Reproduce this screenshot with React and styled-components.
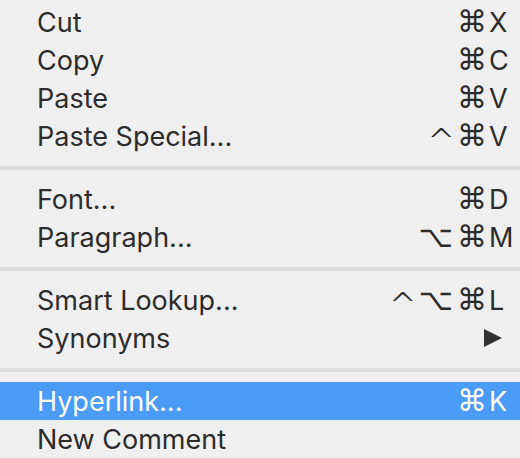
import React from 'react';
import styled, { createGlobalStyle } from 'styled-components';

const GlobalStyle = createGlobalStyle`
  html, body {
    margin: 0;
    padding: 0;
    background: #efefef;
  }
`;

const Menu = styled.div`
  width: 520px;
  height: 458px;
  box-sizing: border-box;
  padding-top: 3px;
  background: #efefef;
  font-family: Inter, "Liberation Sans", sans-serif;
  font-size: 27px;
  color: #2c2c2c;
  overflow: hidden;
`;

const Row = styled.div`
  display: flex;
  align-items: center;
  height: 38px;
  padding-left: 37px;
  background: ${p => (p.active ? '#4b9bf9' : 'transparent')};
  color: ${p => (p.active ? '#ffffff' : 'inherit')};
`;

const Label = styled.span`
  flex: 1;
  white-space: nowrap;
`;

const Mods = styled.span`
  display: flex;
  align-items: center;
  height: 38px;
`;

const Mod = styled.span`
  display: inline-block;
  margin-left: 4px;
  font-family: "DejaVu Sans", sans-serif;
  font-size: 30px;
  line-height: 38px;
`;

const Caret = styled.span`
  display: inline-block;
  width: 22px;
  margin-right: 4px;
  font-family: "DejaVu Sans", sans-serif;
  font-size: 34px;
  font-weight: 200;
  line-height: 38px;
  text-align: center;
  transform: translateY(5px);
`;

const Key = styled.span`
  width: 31px;
  padding-left: 2px;
`;

const Arrow = styled.span`
  width: 0;
  height: 0;
  margin-right: 18px;
  border-top: 9.5px solid transparent;
  border-bottom: 9.5px solid transparent;
  border-left: 18px solid #333;
`;

const Separator = styled.div`
  height: 4px;
  margin: 11px 0 10px;
  background: #dcdcdc;
`;

const groups = [
  [
    { label: 'Cut', mods: '⌘', key: 'X' },
    { label: 'Copy', mods: '⌘', key: 'C' },
    { label: 'Paste', mods: '⌘', key: 'V' },
    { label: 'Paste Special...', mods: '^⌘', key: 'V' },
  ],
  [
    { label: 'Font...', mods: '⌘', key: 'D' },
    { label: 'Paragraph...', mods: '⌥⌘', key: 'M' },
  ],
  [
    { label: 'Smart Lookup...', mods: '^⌥⌘', key: 'L' },
    { label: 'Synonyms', submenu: true },
  ],
  [
    { label: 'Hyperlink...', mods: '⌘', key: 'K', active: true },
    { label: 'New Comment' },
  ],
];

const App = () => (
  <>
    <GlobalStyle />
    <Menu>
      {groups.map((items, gi) => (
        <React.Fragment key={gi}>
          {gi > 0 && <Separator />}
          {items.map(item => (
            <Row key={item.label} active={item.active}>
              <Label>{item.label}</Label>
              {item.submenu && <Arrow />}
              {item.key && (
                <>
                  <Mods>
                    {[...item.mods].map((m, i) =>
                      m === '^' ? <Caret key={i}>^</Caret> : <Mod key={i}>{m}</Mod>
                    )}
                  </Mods>
                  <Key>{item.key}</Key>
                </>
              )}
            </Row>
          ))}
        </React.Fragment>
      ))}
    </Menu>
  </>
);

export default App;
